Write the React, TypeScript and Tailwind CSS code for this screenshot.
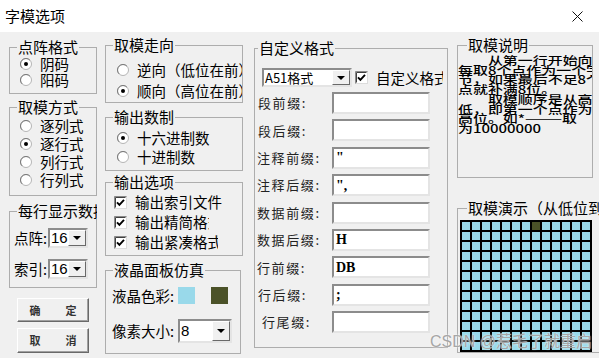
import type { ReactNode } from 'react'

const FIELDS: [string, string, string][] = [
  ['段前缀:', '', 'pl-[3px]'],
  ['段后缀:', '', 'pl-[3px]'],
  ['注释前缀:', '"', 'pl-[2px]'],
  ['注释后缀:', '",', 'pl-[2px]'],
  ['数据前缀:', '', 'pl-[2px]'],
  ['数据后缀:', 'H', 'pl-[2px]'],
  ['行前缀:', 'DB', 'pl-[2px]'],
  ['行后缀:', ';', 'pl-[3px]'],
  ['行尾缀:', '', 'pl-[7px]'],
]

const NOTE = [
  '　　从第一行开始向右取',
  '每取8个点作为一个字',
  '节，如果最后不足8个',
  '点就补满8位。',
  '　　取模顺序是从高到',
  '低，即第一个点作为最',
  '高位。如*———取',
  '为10000000',
]

function Group({
  title,
  className = '',
  legend = 'ml-[7px]',
  children,
}: {
  title: string
  className?: string
  legend?: string
  children: ReactNode
}) {
  return (
    <fieldset className={`min-w-0 overflow-hidden border border-[#adadad] ${className}`}>
      <legend className={`overflow-hidden whitespace-nowrap px-px text-[15px] leading-[16px] ${legend}`}>
        {title}
      </legend>
      {children}
    </fieldset>
  )
}

function Radio({ checked }: { checked?: boolean }) {
  return (
    <svg width="12" height="12" viewBox="0 0 12 12" className="shrink-0">
      <circle cx="6" cy="6" r="5.5" fill="#fff" stroke="#b4b4b4" />
      <path d="M2.1 9.9A5.5 5.5 0 0 1 9.9 2.1" fill="none" stroke="#7a7a7a" />
      {checked && <circle cx="6" cy="6" r="2" fill="#000" />}
    </svg>
  )
}

function Check() {
  return (
    <svg width="13" height="13" viewBox="0 0 13 13" className="shrink-0">
      <rect x="0.5" y="0.5" width="12" height="12" fill="#fff" stroke="#dcdcdc" />
      <path d="M0.5 12.5V0.5H12.5" fill="none" stroke="#8a8a8a" />
      <path d="M1.5 11.5V1.5H11.5" fill="none" stroke="#404040" />
      <path d="M3 6.3l2.4 2.5L10 3.8" fill="none" stroke="#000" strokeWidth="1.9" />
    </svg>
  )
}

function RadioRow({ label, checked, className = '' }: { label: string; checked?: boolean; className?: string }) {
  return (
    <div className={`flex items-center ${className}`}>
      <Radio checked={checked} />
      <span className="ml-[8px] whitespace-nowrap">{label}</span>
    </div>
  )
}

function Combo({ value, className = '', text = '' }: { value: string; className?: string; text?: string }) {
  return (
    <div
      className={`flex shrink-0 border-2 border-t-[#8c8c8c] border-l-[#8c8c8c] border-b-[#e4e4e4] border-r-[#e4e4e4] bg-white ${className}`}
    >
      <div className={`flex flex-1 items-center overflow-hidden whitespace-nowrap pl-[1px] ${text}`}>{value}</div>
      <div className="flex w-[18px] items-center justify-center border border-t-white border-l-white border-b-[#696969] border-r-[#696969] bg-[#f0f0f0]">
        <svg width="8" height="4" viewBox="0 0 8 4">
          <path d="M0 0h8L4 4z" fill="#000" />
        </svg>
      </div>
    </div>
  )
}

function Button({ a, b, className = '' }: { a: string; b: string; className?: string }) {
  return (
    <button
      className={`ml-[8px] flex w-[72px] items-center justify-center gap-[25px] border border-t-white border-l-white border-b-[#696969] border-r-[#696969] bg-[#f0f0f0] text-[11px] font-bold text-[#333] shadow-[inset_-1px_-1px_0_#a0a0a0] ${className}`}
    >
      <span>{a}</span>
      <span>{b}</span>
    </button>
  )
}

export default function App() {
  return (
    <div className="relative h-[358px] w-[599px] overflow-hidden bg-[#f0f0f0] font-['Noto_Sans_CJK_SC','Noto_Sans',sans-serif] text-black [text-spacing-trim:space-all]">
      <div className="flex h-[32px] items-center justify-between bg-white pl-[5px] pr-[16px]">
        <span className="text-[15px]">字模选项</span>
        <svg width="11" height="11" viewBox="0 0 11 11">
          <path d="M0.5 0.5l10 10M10.5 0.5l-10 10" stroke="#111" strokeWidth="1" />
        </svg>
      </div>

      <div className="flex items-start pl-[9px] text-[14.5px]">
        {/* column 1 */}
        <div className="flex w-[88px] shrink-0 flex-col pt-[7px]">
          <Group title="点阵格式" className="h-[55px]">
            <div className="pl-[10px] pt-px">
              <RadioRow label="阴码" checked className="h-[16px]" />
              <RadioRow label="阳码" className="h-[16px]" />
            </div>
          </Group>
          <Group title="取模方式" className="mt-[5px] h-[97px]">
            <div className="pl-[10px] pt-[2px]">
              <RadioRow label="逐列式" className="h-[18px]" />
              <RadioRow label="逐行式" checked className="h-[18px]" />
              <RadioRow label="列行式" className="h-[18px]" />
              <RadioRow label="行列式" className="h-[18px]" />
            </div>
          </Group>
          <Group title="每行显示数据" className="mt-[7px] h-[85px]" legend="ml-[7px] max-w-[80px]">
            <div className="flex flex-col gap-[11px] pl-[4px] pt-[9px]">
              <div className="flex h-[20px] items-center">
                <span className="w-[34px]">点阵:</span>
                <Combo value="16" className="h-[20px] w-[40px]" text="font-['Liberation_Sans',sans-serif] text-[15px]" />
              </div>
              <div className="flex h-[20px] items-center">
                <span className="w-[34px]">索引:</span>
                <Combo value="16" className="h-[20px] w-[40px]" text="font-['Liberation_Sans',sans-serif] text-[15px]" />
              </div>
            </div>
          </Group>
          <Button a="确" b="定" className="mt-[10px] h-[24px]" />
          <Button a="取" b="消" className="mt-[6px] h-[25px]" />
        </div>

        {/* column 2 */}
        <div className="ml-[8px] flex w-[138px] shrink-0 flex-col pt-[5px]">
          <Group title="取模走向" className="h-[66px]">
            <div className="pl-[11px] pt-[6px]">
              <RadioRow label="逆向（低位在前）" className="h-[21px]" />
              <RadioRow label="顺向（高位在前）" checked className="h-[21px]" />
            </div>
          </Group>
          <Group title="输出数制" className="mt-[6px] h-[62px]">
            <div className="pl-[11px] pt-[3px]">
              <RadioRow label="十六进制数" checked className="h-[19px]" />
              <RadioRow label="十进制数" className="h-[19px]" />
            </div>
          </Group>
          <Group title="输出选项" className="mt-[3px] h-[82px]">
            <div className="pl-[8px] pt-[2px]">
              {[
                ['输出索引文件', ''],
                ['输出精简格式', 'w-[74px]'],
                ['输出紧凑格式', 'w-[83px]'],
              ].map(([t, w]) => (
                <div key={t} className="flex h-[20px] items-center">
                  <Check />
                  <span className={`ml-[8px] overflow-hidden whitespace-nowrap ${w}`}>{t}</span>
                </div>
              ))}
            </div>
          </Group>
          <Group title="液晶面板仿真" className="mt-[6px] h-[92px] w-[136px]">
            <div className="pl-[6px] pt-[9px]">
              <div className="flex h-[17px] items-center">
                <span className="w-[66px] whitespace-nowrap">液晶色彩:</span>
                <div className="h-[17px] w-[17px] bg-[#99d9ea]" />
                <div className="ml-[16px] h-[17px] w-[17px] bg-[#4b5228]" />
              </div>
              <div className="mt-[15px] flex h-[24px] items-center">
                <span className="w-[66px] whitespace-nowrap">像素大小:</span>
                <Combo value="8" className="h-[24px] w-[54px]" text="font-['Liberation_Sans',sans-serif] text-[15px]" />
              </div>
            </div>
          </Group>
        </div>

        {/* column 3 */}
        <div className="ml-[11px] w-[194px] shrink-0 pt-[8px]">
          <Group title="自定义格式" className="h-[308px]" legend="ml-[3px]">
            <div className="pt-[12px]">
              <div className="flex h-[19px] items-center pl-[7px]">
                <Combo value="A51格式" className="h-[19px] w-[90px]" text="text-[13px]" />
                <div className="ml-[3px] flex w-[88px] items-center overflow-hidden">
                  <Check />
                  <span className="ml-[8px] whitespace-nowrap">自定义格式</span>
                </div>
              </div>
              <div className="mt-[5px] flex flex-col gap-[5.4px]">
                {FIELDS.map(([label, value, pad]) => (
                  <div key={label} className="flex h-[22px] items-center">
                    <span className={`w-[77px] whitespace-nowrap text-[13px] tracking-[1.6px] text-[#222] ${pad}`}>
                      {label}
                    </span>
                    <div className="flex h-[22px] w-[98px] items-center border-2 border-t-[#8c8c8c] border-l-[#8c8c8c] border-b-[#e4e4e4] border-r-[#e4e4e4] bg-white pl-[2px] font-['Liberation_Serif',serif] text-[14px] font-semibold">
                      {value}
                    </div>
                  </div>
                ))}
              </div>
            </div>
          </Group>
        </div>

        {/* column 4 */}
        <div className="ml-[9px] flex w-[160px] shrink-0 flex-col pt-[5px]">
          <Group title="取模说明" className="h-[141px] w-[136px]" legend="ml-[9px]">
            <div className="h-[120px] overflow-hidden pt-[3px]">
              <div className="origin-top-left scale-x-[1.3] text-[11.5px] font-medium leading-[9.7px]">
                {NOTE.map((line) => (
                  <div key={line} className="whitespace-nowrap">
                    {line}
                  </div>
                ))}
              </div>
            </div>
          </Group>
          <Group title="取模演示（从低位到高位）" className="mt-[22px] h-[153px] w-[160px]" legend="ml-[9px]">
            <div className="pl-[2px] pt-[4px]">
              <div className="grid w-max grid-cols-[repeat(13,8px)] gap-[2px] bg-black p-[2px]">
                {Array.from({ length: 169 }, (_, i) => (
                  <div key={i} className={`h-[8px] ${i === 7 ? 'bg-[#4b5228]' : 'bg-[#99d9ea]'}`} />
                ))}
              </div>
            </div>
          </Group>
        </div>
      </div>

      <div className="absolute left-[430px] top-[332px] whitespace-nowrap font-['Liberation_Sans','Noto_Sans_CJK_SC',sans-serif] text-[16px] leading-[20px] text-[#a6a6a6] [text-shadow:0_0_2px_#fff]">
        CSDN @惹毛了就重启
      </div>
    </div>
  )
}
